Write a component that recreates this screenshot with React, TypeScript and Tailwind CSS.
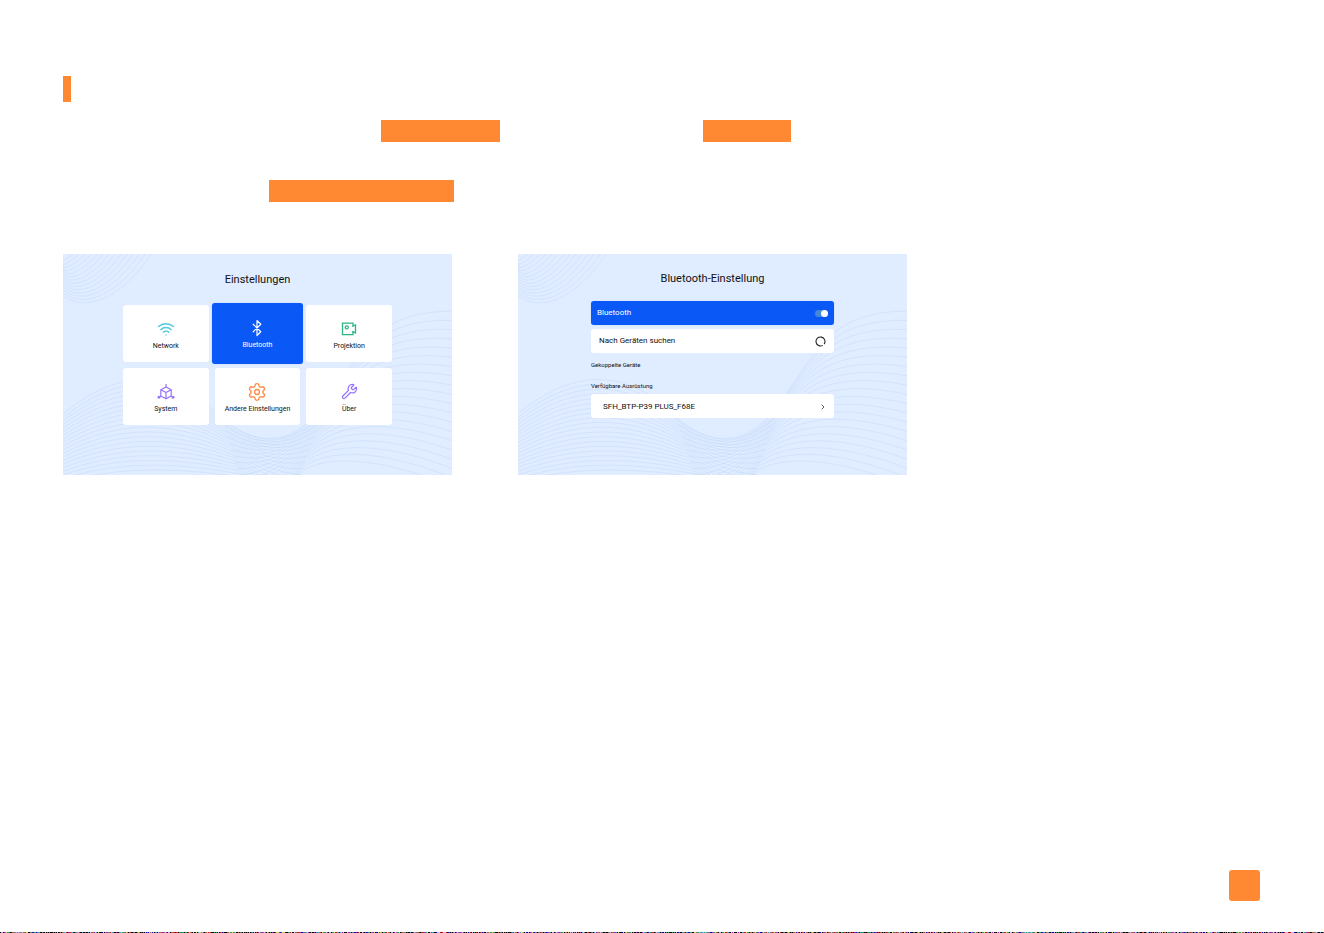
import type { ReactNode } from 'react'
import { Bluetooth, ChevronRight, Settings, Wifi, Wrench } from 'lucide-react'

const LINES = 20

// Thin contour lines behind the projector menus
function Waves() {
  const steps = Array.from({ length: LINES }, (_, i) => i / (LINES - 1))

  return (
    <svg
      viewBox="0 0 389 221"
      preserveAspectRatio="none"
      className="absolute inset-0 h-full w-full"
      fill="none"
      stroke="#a9c8f5"
      strokeOpacity="0.32"
      strokeWidth="0.8"
      aria-hidden="true"
    >
      {Array.from({ length: 14 }, (_, i) => (
        <path
          key={`corner-${i}`}
          d={`M${88 - 6 * i} 0C${66 - 5 * i} ${34 - 2 * i} ${30 - 3 * i} ${62 - 4 * i} 0 ${42 - 3 * i}`}
        />
      ))}
      {steps.map((t) => {
        const x = 155 + 22 * t
        const y = 161 + 62 * t
        const endX = 257 - 40 * t
        const endY = 164 + 120 * t
        const dip = 46 * (1 - t) ** 2
        return (
          <path
            key={`left-${t}`}
            d={`M0 ${160 + 68 * t}C50 ${118 + 96 * t} 105 ${110 + 102 * t} ${x} ${y}Q${(x + endX) / 2} ${(y + endY) / 2 + dip} ${endX} ${endY}`}
          />
        )
      })}
      {steps.map((t) => {
        const x = 267 - 32 * t
        const y = 141 + 80 * t
        const endX = 158 + 40 * t
        const endY = 164 + 120 * t
        const dip = 62 * (1 - t) ** 2
        return (
          <path
            key={`right-${t}`}
            d={`M${endX} ${endY}Q${(x + endX) / 2 + 8 * (1 - t)} ${(y + endY) / 2 + dip} ${x} ${y}C${x + 36 - 20 * t} ${y - 52 + 34 * t} ${318 - 10 * t} ${58 + 140 * t} 389 ${57 + 176 * t}`}
          />
        )
      })}
    </svg>
  )
}

function ProjectionIcon() {
  return (
    <svg viewBox="0 0 18 18" className="size-[18px]" fill="none" stroke="#2fb680" strokeWidth="1.3" aria-hidden="true">
      <path d="M13 6.2V3.2H2.5v11.4H13v-3M13 6.2l2.5-1.4v8.2L13 11.6M13 6.2h-1M13 11.6h-1" />
      <circle cx="6.8" cy="7.4" r="1.5" />
    </svg>
  )
}

function CubeIcon() {
  return (
    <svg viewBox="0 0 18 18" className="size-[18px]" fill="none" stroke="#9673fb" strokeWidth="1.2" strokeLinejoin="round" aria-hidden="true">
      <path d="M9 4l5.2 2.7v6.2L9 15.8l-5.2-2.9V6.7zM3.8 6.7L9 9.5l5.2-2.8M9 9.5v6.3" />
      <path d="M9 1v3M3.8 12.9L1 14.8M14.2 12.9l2.8 1.9M1.6 12.9L1 14.8h2.4M16.4 12.9l.6 1.9h-2.4" />
    </svg>
  )
}

function Tile({ icon, label, active }: { icon: ReactNode; label: string; active?: boolean }) {
  return (
    <button
      className={
        active
          ? '-mx-[3px] -my-[2px] flex flex-col items-center justify-center gap-1 rounded-[3px] bg-[#0a59f7] text-[7px] leading-[8px] text-white shadow-[0_0_1px_#8fb5fb]'
          : 'flex flex-col items-center justify-center gap-1 rounded-[3px] bg-white pt-[2px] text-[7px] leading-[8px] text-[#111]'
      }
    >
      <span className="flex h-[18px] items-center">{icon}</span>
      <span className="whitespace-nowrap">{label}</span>
    </button>
  )
}

function SettingsScreen() {
  return (
    <section className="relative aspect-[389/221] bg-[#e0ecff]">
      <Waves />
      <div className="relative flex flex-col items-center pt-[18px]">
        <h2 className="text-[11px] leading-[15px] text-[#111]">Einstellungen</h2>
        <div className="mt-[18px] grid w-[269px] grid-cols-3 grid-rows-[57px_57px] gap-x-[6px] gap-y-[6px]">
          <Tile icon={<Wifi className="size-[18px] text-[#4ccbdc]" strokeWidth={1.8} />} label="Network" />
          <Tile icon={<Bluetooth className="size-[18px]" strokeWidth={1.6} />} label="Bluetooth" active />
          <Tile icon={<ProjectionIcon />} label="Projektion" />
          <Tile icon={<CubeIcon />} label="System" />
          <Tile icon={<Settings className="size-[20px] text-[#ff8b42]" strokeWidth={1.6} />} label="Andere Einstellungen" />
          <Tile icon={<Wrench className="size-[17px] text-[#9673fb]" strokeWidth={1.8} />} label="Über" />
        </div>
      </div>
    </section>
  )
}

function BluetoothScreen() {
  return (
    <section className="relative aspect-[389/221] bg-[#e0ecff]">
      <Waves />
      <div className="relative mx-auto flex w-[243px] flex-col pt-[17px] text-[#111]">
        <h2 className="text-center text-[11px] leading-[15px]">Bluetooth-Einstellung</h2>
        <label className="mt-[15px] flex h-[24px] items-center justify-between rounded-[3px] bg-[#0a59f7] px-[6px] text-[8px] text-white shadow-[0_0_1px_#8fb5fb]">
          Bluetooth
          <span className="relative flex h-[7px] w-[13px] items-center rounded-full bg-[#4688d8]">
            <input type="checkbox" role="switch" defaultChecked className="peer absolute inset-0 appearance-none" />
            <span className="size-[7px] rounded-full bg-white peer-checked:ml-auto" />
          </span>
        </label>
        <button className="mt-[4px] flex h-[24px] items-center justify-between rounded-[3px] bg-white px-2 text-[8px]">
          Nach Geräten suchen
          <svg viewBox="0 0 12 12" className="size-[11px]" fill="none" stroke="#222" strokeWidth="1.2" aria-hidden="true">
            <path d="M8.5 10.2A4.9 4.9 0 1 1 10 8.8" />
          </svg>
        </button>
        <h3 className="mt-[7px] text-[6px] leading-[10px]">Gekoppelte Geräte</h3>
        <h3 className="mt-[11px] text-[6px] leading-[10px]">Verfügbare Ausrüstung</h3>
        <button className="mt-[3px] flex h-[24px] items-center justify-between rounded-[3px] bg-white pt-px pr-[7px] pl-3 text-[8px]">
          SFH_BTP-P39 PLUS_F68E
          <ChevronRight className="size-[8px]" />
        </button>
      </div>
    </section>
  )
}

const NOISE = ['#000', '#000', '#0c0cc8', '#c02020', '#20a060', '#a020c0', '#d0d060', '#707070', '#40a0c0', '#000', '#b06030', '#c8a8e0']

// Coloured one-pixel strip along the bottom edge
function EdgeStrip() {
  const cells = Array.from({ length: 1324 }, (_, i) => NOISE[((i * 7919 + i * i * 31) % 1009) % NOISE.length])
  return (
    <svg viewBox="0 0 1324 1" preserveAspectRatio="none" className="block h-px w-full" shapeRendering="crispEdges" aria-hidden="true">
      {cells.map((fill, i) => (
        <rect key={i} x={i} width="1" height="1" fill={fill} />
      ))}
    </svg>
  )
}

export default function App() {
  return (
    <div className="flex min-h-screen flex-col bg-white font-[Roboto,sans-serif]">
      <main className="px-[63px] pt-[76px]">
        <div className="h-[26px] w-2 bg-[#ff8833]" />
        <div className="mt-[18px] flex">
          <div className="ml-[318px] h-[22px] w-[119px] bg-[#ff8833]" />
          <div className="ml-[203px] h-[22px] w-[88px] bg-[#ff8833]" />
        </div>
        <div className="mt-[38px] ml-[206px] h-[22px] w-[185px] bg-[#ff8833]" />
        <div className="mt-[52px] grid max-w-[844px] grid-cols-2 gap-[66px]">
          <SettingsScreen />
          <BluetoothScreen />
        </div>
      </main>
      <footer className="mt-auto">
        <div className="mr-16 mb-[31px] ml-auto size-[31px] rounded-[3px] bg-[#ff8833]" />
        <EdgeStrip />
      </footer>
    </div>
  )
}
